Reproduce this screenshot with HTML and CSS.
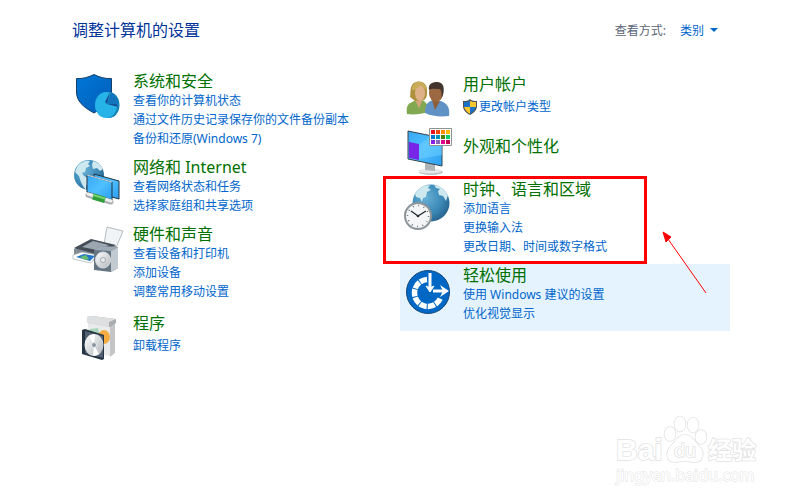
FILE: index.html
```html
<!DOCTYPE html>
<html lang="zh-CN">
<head>
	<meta charset="utf-8">
	<title>控制面板</title>
	<link rel="stylesheet" href="styles.css">
</head>
<body>
	<main class="panel">
		<header class="top">
			<h1>调整计算机的设置</h1>
			<div class="view">
				<label for="view-by">查看方式:</label>
				<select id="view-by">
					<option>类别</option>
				</select>
				<svg class="caret" viewBox="0 0 8 4"><path d="M0 0h8L4 4z" fill="#0066cc"/></svg>
			</div>
		</header>

		<div class="columns">
			<div class="column">
				<section class="item">
					<svg class="icon" viewBox="0 0 48 48">
						<defs>
							<linearGradient id="shield" x1="0" y1="0" x2="1" y2="1"><stop offset="0" stop-color="#0078d7"/><stop offset="1" stop-color="#005cb8"/></linearGradient>
							<radialGradient id="globe" cx=".35" cy=".35" r=".75"><stop offset="0" stop-color="#68b0d6"/><stop offset=".6" stop-color="#3b89b7"/><stop offset="1" stop-color="#235e87"/></radialGradient>
							<linearGradient id="screen" x1="0" y1="0" x2="1" y2="1"><stop offset="0" stop-color="#38a7f5"/><stop offset=".5" stop-color="#4fc0ff"/><stop offset="1" stop-color="#2a9df0"/></linearGradient>
							<linearGradient id="metal" x1="0" y1="0" x2="1" y2="1"><stop offset="0" stop-color="#fdfdfd"/><stop offset="1" stop-color="#b3b8bc"/></linearGradient>
						</defs>
						<path d="M3.500 6.500C10 7 16 5 21 2.500 26 5 32 7 38.500 6.500V20c0 9-7 15-17.500 21C10 35 3.500 29 3.500 20z" fill="url(#shield)" stroke="#173f66"/>
						<ellipse cx="36" cy="33" rx="10.500" ry="13" fill="#1583b5"/>
						<ellipse cx="33" cy="33" rx="11" ry="13" fill="#26b4e8"/>
						<path d="M34 32l4-12c4 2 7 7 7 13z" fill="#1274bd"/>
						<path d="M34 32l-2-2 4-8 1-1zM34 32l11 3-2-3z" fill="#164f92"/>
					</svg>
					<div class="text">
						<h2><a href="#">系统和安全</a></h2>
						<a href="#">查看你的计算机状态</a>
						<a href="#">通过文件历史记录保存你的文件备份副本</a>
						<a href="#">备份和还原(Windows 7)</a>
					</div>
				</section>

				<section class="item">
					<svg class="icon" viewBox="0 0 48 48">
						<circle cx="16" cy="17" r="15" fill="url(#globe)"/>
						<path d="M4 9C8 3 14 2 17 3l-2 3 2 2-4 2-1 4-3 1 2 3 4 2 1 4-3 4v4C9 28 7 22 6 18L2 14zM20 3c5 1 8 5 10 8l-3 2-3-3-4 1-1-4z" fill="#cde8ef"/>
						<path d="M21 16l25 7v18l-25-7z" fill="url(#screen)" stroke="#24333d"/>
						<path d="M14 17l25 7v18l-25-8z" fill="url(#screen)" stroke="#24333d"/>
						<path d="M14 17l25 7" stroke="#fff" stroke-width=".8"/>
						<path d="M15 37l23 7" stroke="#a9acae" stroke-width="5" stroke-linecap="round"/>
						<path d="M15 36l23 7" stroke="#edeeee" stroke-width="3" stroke-linecap="round"/>
						<path d="M20 38.500l12 3.500" stroke="#2f9e3b" stroke-width="6"/>
						<path d="M20 37l12 3.500" stroke="#76d472" stroke-width="2"/>
					</svg>
					<div class="text">
						<h2><a href="#">网络和 Internet</a></h2>
						<a href="#">查看网络状态和任务</a>
						<a href="#">选择家庭组和共享选项</a>
					</div>
				</section>

				<section class="item">
					<svg class="icon" viewBox="0 0 48 48">
						<path d="M34 2l16 4-7 17-12-4z" fill="#f1f4f7" stroke="#a5acb2" stroke-width=".8"/>
						<path d="M1 24l17-9 25 6v8l-20 7-22-5z" fill="#838b95"/>
						<path d="M1 23l17-9 25 6-20 9z" fill="#444d58"/>
						<path d="M9 22l11-6 16 4-12 5z" fill="#9da7b1"/>
						<path d="M0 30l9-3 15 3-6 8-18-4z" fill="#fff" stroke="#98a2aa" stroke-width=".6"/>
						<path d="M3 32l8-3 11 2-5 5z" fill="#2473c4"/>
						<path d="M7 32l6-2 3 4-4 1z" fill="#68bd6d"/>
						<path d="M21 25l6-4 18 1v21l-7 4-17-2z" fill="#657582"/>
						<path d="M38 26l7-4v21l-7 4z" fill="#c1c9d1"/>
						<path d="M21 25l6-4 18 1-7 4z" fill="#9eabb6"/>
						<ellipse cx="30" cy="35" rx="7.500" ry="8" fill="url(#metal)" stroke="#d7dcdf"/>
						<circle cx="30" cy="35" r="2.500" fill="#e9ecee" stroke="#8b9399" stroke-width=".7"/>
					</svg>
					<div class="text">
						<h2><a href="#">硬件和声音</a></h2>
						<a href="#">查看设备和打印机</a>
						<a href="#">添加设备</a>
						<a href="#">调整常用移动设置</a>
					</div>
				</section>

				<section class="item short">
					<svg class="icon" viewBox="0 0 48 48">
						<path d="M15 11l22 3v31l-22-4z" fill="#e9eaeb"/>
						<path d="M37 14l5-4v32l-5 4z" fill="#c3c5c7"/>
						<path d="M14 6l5-1 24 3v4l-6 4-21-4z" fill="#a9adaf"/>
						<path d="M14 6l5-1 24 3-7 3v5l-22-4z" fill="#dddfe0"/>
						<path d="M17 18l8-1 3 13-10-2z" fill="#aad6bc"/>
						<ellipse cx="31" cy="26" rx="6" ry="7" fill="#f5ad43"/>
						<path d="M9 19l3-1 19 6v24l-2 1-20-6z" fill="#253443"/>
						<path d="M12 20l18 5v22l-18-5z" fill="#526171"/>
						<ellipse cx="21" cy="34" rx="9.500" ry="11" fill="url(#metal)"/>
						<path d="M21 34l-5-9c2-1 4-2 6-1zM21 34l5 9c-2 1-4 2-6 2z" fill="#fff"/>
						<circle cx="21" cy="34" r="2.500" fill="#8794a0" stroke="#e9eef1"/>
					</svg>
					<div class="text">
						<h2><a href="#">程序</a></h2>
						<a href="#">卸载程序</a>
					</div>
				</section>
			</div>

			<div class="column">
				<section class="item short">
					<svg class="icon" viewBox="0 0 48 48">
						<path d="M4 42c-1-7 0-10 7-13l8-1c5 2 6 6 6 12-6 2-14 3-21 2z" fill="#83a852"/>
						<path d="M12 28l8-1-4 9z" fill="#d6a47c"/>
						<path d="M7 25c1-4-1-13 6-15 7-2 12 3 11 10 0 3 0 6-3 8l-9 1z" fill="#ae913f"/>
						<ellipse cx="17" cy="21" rx="5" ry="8" fill="#dfb188"/>
						<path d="M9 18c3 0 7-2 9-6 1 3 3 5 6 6-1-6-5-9-10-8-3 1-5 4-5 8z" fill="#c9ad58"/>
						<path d="M22 41c0-8 2-11 8-13l8 1c7 3 9 7 8 15-9 1-18 0-24-3z" fill="#6192c5"/>
						<path d="M29 28l8 1-5 9z" fill="#8e5e3b"/>
						<ellipse cx="33" cy="21" rx="7" ry="9" fill="#9b6842"/>
						<path d="M26 18c-1-6 3-8 8-8 6 0 8 5 6 13l-2 4c1-4 1-7-1-10-4 0-8-1-11 1z" fill="#42352d"/>
					</svg>
					<div class="text">
						<h2><a href="#">用户帐户</a></h2>
						<a href="#" class="admin"><svg class="uac" viewBox="0 0 14 16">
							<path d="M7 0c2 2 4 2 7 2v5c0 4-3 7-7 9-4-2-7-5-7-9V2c3 0 5 0 7-2z" fill="#4b5154"/>
							<path d="M7 2v6H1V3c2 0 4 0 6-1z" fill="#1c71c9"/>
							<path d="M7 2c2 1 4 1 6 1v5H7z" fill="#fcc72e"/>
							<path d="M1 8h6v7c-3-2-5-4-6-7z" fill="#fcc72e"/>
							<path d="M7 8h6c-1 3-3 5-6 7z" fill="#1c71c9"/>
						</svg>更改帐户类型</a>
					</div>
				</section>

				<section class="item single">
					<svg class="icon" viewBox="0 0 48 48">
						<ellipse cx="28" cy="46" rx="12" ry="3" fill="#b9bdc0"/>
						<ellipse cx="27" cy="45" rx="12" ry="2.500" fill="#e6e8e9"/>
						<path d="M22 36l10 2v7l-10-1z" fill="#aeb5b9"/>
						<path d="M5 5l34 7v28L5 33z" fill="url(#screen)" stroke="#38444d"/>
						<path d="M6 16l10 2v16L6 32z" fill="#7925e8"/>
						<path d="M16 19l12-9 11 2v17L16 33z" fill="#70cdff" opacity=".5"/>
						<path d="M26.500 2.500h22v17h-22z" fill="#fff" stroke="#8f9293"/>
						<g stroke-width="4">
							<path d="M28 6h4" stroke="#e81123"/><path d="M33 6h4" stroke="#f7430c"/><path d="M38 6h4" stroke="#ff8c00"/><path d="M43 6h4" stroke="#ffb900"/>
							<path d="M28 11h4" stroke="#0078d7"/><path d="M33 11h4" stroke="#0099bc"/><path d="M38 11h4" stroke="#498205"/><path d="M43 11h4" stroke="#00cc6a"/>
							<path d="M28 16h4" stroke="#881ce8"/><path d="M33 16h4" stroke="#8764b8"/><path d="M38 16h4" stroke="#e3008c"/><path d="M43 16h4" stroke="#c30052"/>
						</g>
					</svg>
					<div class="text">
						<h2><a href="#">外观和个性化</a></h2>
					</div>
				</section>

				<section class="item marked">
					<svg class="icon" viewBox="0 0 48 48">
						<circle cx="28" cy="23" r="18.500" fill="url(#globe)"/>
						<path d="M12 14c4-6 9-9 15-9l-2 3 3 2-4 2-1 5-3 1-1 4-2-4-4-1zM31 5c7 1 11 5 14 10l-2 6-3-5-4-1-1-4 2-2-4-1z" fill="#cde8ef"/>
						<circle cx="15" cy="36" r="13" fill="#f3f5f6" stroke="#8d9499" stroke-width="2"/>
						<circle cx="15" cy="36" r="10.500" fill="none" stroke="#4e5961" stroke-width="1.500" stroke-dasharray=".8 4.698"/>
						<path d="M8 31l7 5 8-5" fill="none" stroke="#20282e" stroke-width="1.300"/>
						<circle cx="15" cy="36" r="1.300" fill="#20282e"/>
					</svg>
					<div class="text">
						<h2><a href="#">时钟、语言和区域</a></h2>
						<a href="#">添加语言</a>
						<a href="#">更换输入法</a>
						<a href="#">更改日期、时间或数字格式</a>
					</div>
					<div class="frame"></div>
					<svg class="arrow" viewBox="0 0 44 62">
						<path d="M5 7l38 54" stroke="#f00" stroke-width="1" fill="none"/>
						<path d="M0 0l8 5-5 5z" fill="#f00" stroke="#f00"/>
					</svg>
				</section>

				<section class="item hover">
					<svg class="icon" viewBox="0 0 48 48">
						<circle cx="25" cy="26" r="21.500" fill="#0067c5" stroke="#154875"/>
						<path d="M24 13.500A13.500 13.500 0 1 0 37.500 32" fill="none" stroke="#fff" stroke-width="5.500" stroke-dasharray="7.200 1"/>
						<path d="M27 7v16" stroke="#fff" stroke-width="3"/>
						<path d="M23 20l4 6 4-6-4 2z" fill="#fff" stroke="#fff"/>
						<path d="M30 25h12" stroke="#fff" stroke-width="3"/>
						<path d="M37 19l9 6-9 6 3-6z" fill="#fff"/>
					</svg>
					<div class="text">
						<h2><a href="#">轻松使用</a></h2>
						<a href="#">使用 Windows 建议的设置</a>
						<a href="#">优化视觉显示</a>
					</div>
				</section>
			</div>
		</div>
	</main>

	<svg class="watermark" viewBox="0 0 150 74">
		<g fill="#fff" stroke="#e2e2e2" stroke-width="1.500">
			<g class="bold">
				<text x="3" y="44" font-size="30">Bai</text>
				<text x="95" y="43" font-size="24">经验</text>
			</g>
			<ellipse cx="57" cy="18" rx="5.500" ry="7"/>
			<ellipse cx="67" cy="8" rx="5.500" ry="7.500"/>
			<ellipse cx="80" cy="9" rx="5.500" ry="7.500"/>
			<ellipse cx="88" cy="21" rx="5.500" ry="7"/>
			<path d="M72 19c7 0 9 6 14 11 6 6 5 16-4 16-4 0-7-1-10-1s-7 1-10 1c-9 0-10-10-4-16 5-5 7-11 14-11z"/>
			<text x="61" y="41" font-size="18">du</text>
			<text x="3" y="65" font-size="16" stroke-width="1">jingyan.baidu.com</text>
		</g>
	</svg>
</body>
</html>
```
FILE: styles.css
```css
body {
    margin: 0;
    background-color: #ffffff;
    font-family: "Noto Sans", "Noto Sans CJK SC", sans-serif;
    font-size: 12px;
    line-height: 19px;
}
h1, h2 {
    margin: 0;
    font-size: 16px;
    font-weight: normal;
    line-height: 20px;
}
h1 {
    color: #003399;
}
a {
    color: #0066cc;
    text-decoration: none;
}
h2 a {
    color: #007000;
}
a:hover {
    text-decoration: underline;
}
.panel {
    padding: 20px 73px 0 70px;
}
.top {
    display: flex;
    justify-content: space-between;
    padding: 0 12px 30px 2px;
}
.view {
    display: flex;
    align-items: center;
    color: #5a6678;
}
.view select {
    appearance: none;
    width: 24px;
    margin: 0 6px 0 14px;
    padding: 0;
    border: none;
    background: none;
    color: #0066cc;
    font: inherit;
}
.caret {
    width: 8px;
    height: 4px;
}
.columns {
    display: grid;
    grid-template-columns: 1fr 1fr;
}
.item {
    position: relative;
    display: flex;
    gap: 12px;
    min-height: 54px;
    padding-left: 3px;
}
.icon {
    flex: none;
    width: 48px;
    height: 48px;
    margin-top: 2px;
    overflow: visible;
}
.text {
    display: flex;
    flex-direction: column;
    align-items: flex-start;
    padding: 1px 0 8px;
    white-space: nowrap;
}
.short .text {
    gap: 3px;
    padding: 4px 0 8px;
}
.single .text {
    padding: 12px 0 8px;
}
.hover {
    background-color: #e5f3ff;
}
.admin {
    display: flex;
    align-items: center;
    gap: 2px;
}
.uac {
    width: 14px;
    height: 16px;
}

/* red marker around the clock entry */
.frame {
    position: absolute;
    top: -2px;
    left: -17px;
    box-sizing: border-box;
    width: 264px;
    height: 88px;
    border: 3px solid #ff0000;
    pointer-events: none;
}
.arrow {
    position: absolute;
    top: 54px;
    left: 263px;
    z-index: 1;
    width: 44px;
    height: 62px;
    overflow: visible;
    pointer-events: none;
}
.watermark {
    position: absolute;
    right: 40px;
    bottom: 13px;
    width: 150px;
    height: 74px;
    overflow: visible;
    pointer-events: none;
    paint-order: stroke;
}
.bold {
    font-family: "Liberation Sans", "Noto Sans CJK SC", sans-serif;
    font-weight: bold;
}
```
